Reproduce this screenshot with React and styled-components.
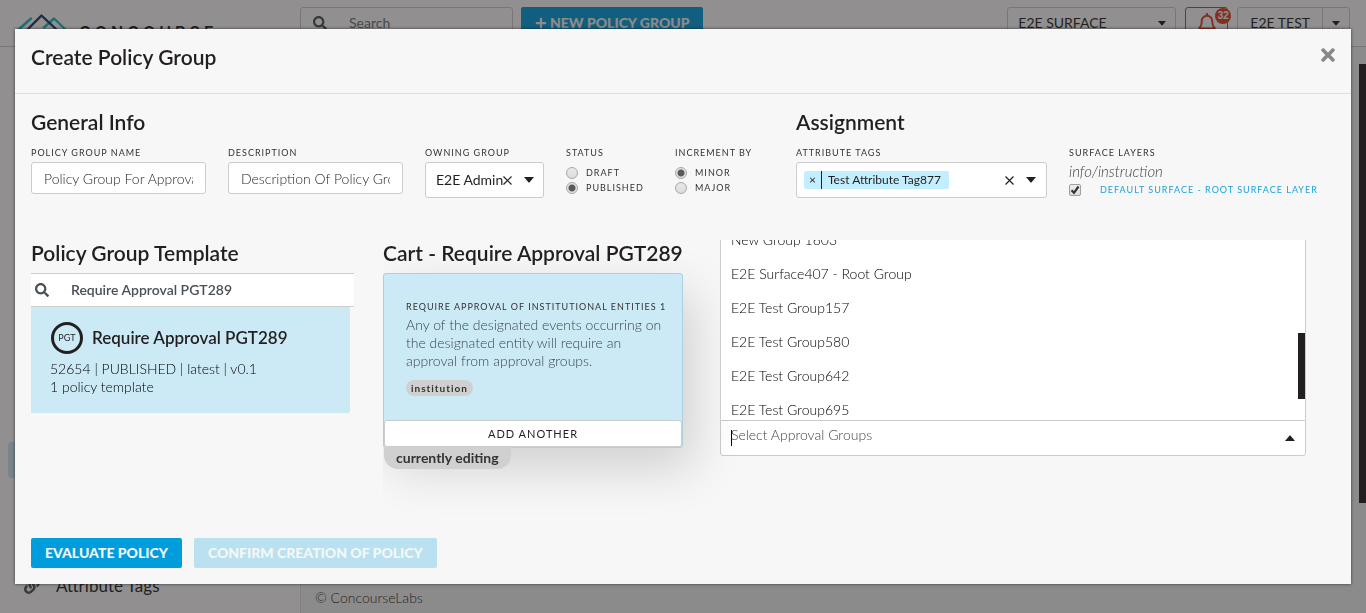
import React from 'react';
import styled, { createGlobalStyle, css } from 'styled-components';
import { FaSearch, FaPlus, FaTimes, FaLink, FaRegBell } from 'react-icons/fa';

const ink = '#231f20';
const blue = '#009ddc';
const paleBlue = '#cceaf6';
const line = '#cccccc';

const GlobalStyle = createGlobalStyle`
  * { box-sizing: border-box; }
  html, body, #root { height: 100%; }
  body {
    margin: 0;
    overflow: hidden;
    color: ${ink};
    font: 400 14px/18px Lato, "Liberation Sans", sans-serif;
  }
  button, input, select { font: inherit; color: inherit; margin: 0; }
  button { cursor: pointer; }
  h1, h2, p, ul, fieldset, legend { margin: 0; padding: 0; border: 0; }
  ul { list-style: none; }
`;

/* ---------- page behind the dialog ---------- */

const Page = styled.div`
  height: 100%;
  display: flex;
  flex-direction: column;
  background: #fff;
`;

const TopBar = styled.header`
  height: 47px;
  flex: none;
  display: flex;
  align-items: flex-start;
  padding: 7px 16px 0 0;
  border-bottom: 1px solid ${line};
`;

const Brand = styled.a`
  width: 300px;
  display: flex;
  align-items: flex-start;
  padding: 5px 0 0 16px;
  color: ${ink};
  text-decoration: none;
`;

const BrandName = styled.span`
  padding: 10px 0 0 10px;
  font: 600 16px/20px Inter, "Liberation Sans", sans-serif;
  letter-spacing: 4px;
`;

const SearchBox = styled.label`
  width: 213px;
  height: 32px;
  display: flex;
  align-items: center;
  gap: 22px;
  margin-right: 8px;
  padding: 0 12px;
  border: 1px solid ${line};
  border-radius: 3px;
  color: #495057;
`;

const PlainInput = styled.input`
  flex: 1;
  min-width: 0;
  width: 100%;
  height: 18px;
  padding: 0;
  border: 0;
  outline: 0;
  background: transparent;
  font-weight: ${(p) => p.$weight || 400};
  &::placeholder { color: ${(p) => (p.$weight === 300 ? '#3c454d' : '#6c757d')}; opacity: 1; }
`;

const Button = styled.button`
  height: ${(p) => (p.$tall ? 32 : 30)}px;
  display: inline-flex;
  align-items: center;
  gap: 3px;
  padding: 0 14px;
  border: 0;
  border-radius: 2px;
  background: ${blue};
  color: #f7f7f7;
  font-weight: 900;
  white-space: nowrap;
  &:disabled { background: #b9e1f0; cursor: default; }
`;

const BarTools = styled.div`
  margin-left: auto;
  display: flex;
  gap: 9px;
`;

const SelectWrap = styled.div`
  position: relative;
  width: ${(p) => p.$width}px;
  height: ${(p) => p.$height}px;
`;

const Select = styled.select`
  appearance: none;
  width: 100%;
  height: 100%;
  padding: 0 10px;
  border: 1px solid ${line};
  border-radius: 3px;
  background: ${(p) => (p.$filled ? '#fff' : 'transparent')};
`;

const SelectMarks = styled.span`
  position: absolute;
  inset: 0 10px 0 auto;
  display: flex;
  align-items: center;
  gap: 12px;
  pointer-events: none;
`;

const AlertButton = styled.button`
  position: relative;
  width: 43px;
  height: 32px;
  border: 1px solid #dc3e26;
  border-radius: 3px;
  background: transparent;
  color: #dc3e26;
  font-size: 20px;
`;

const Badge = styled.span`
  position: absolute;
  top: 0;
  right: -4px;
  width: 16px;
  height: 16px;
  border-radius: 50%;
  background: #dc3e26;
  color: #fff;
  font: 700 10px/16px "Liberation Sans", sans-serif;
  text-align: center;
`;

const SplitButton = styled.div`
  display: flex;
  height: 32px;
  border: 1px solid ${line};
  border-radius: 3px;
`;

const SplitPart = styled.button`
  padding: 0 ${(p) => (p.$caret ? 9 : 12)}px;
  border: 0;
  border-left: ${(p) => (p.$caret ? `1px solid ${line}` : 0)};
  background: transparent;
  display: flex;
  align-items: center;
`;

const Columns = styled.div`
  flex: 1;
  display: flex;
  min-height: 0;
`;

const Sidebar = styled.nav`
  width: 301px;
  display: flex;
  flex-direction: column;
  justify-content: flex-end;
  gap: 90px;
  padding: 8px 8px 9px;
  border-right: 1px solid #e2e2e2;
`;

const NavLink = styled.a`
  height: 36px;
  display: flex;
  align-items: center;
  gap: 16px;
  padding: 0 16px;
  border-radius: 3px;
  background: ${(p) => (p.$current ? paleBlue : 'transparent')};
  color: ${ink};
  font-size: 17px;
  text-decoration: none;
  svg { color: #555; }
`;

const Main = styled.main`
  flex: 1;
  display: flex;
  align-items: flex-end;
  justify-content: space-between;
  background: #f5f7f8;
`;

const Copyright = styled.footer`
  padding: 0 14px 6px;
  color: ${ink};
  font-weight: 300;
`;

const PageScroll = styled.div`
  align-self: stretch;
  width: 7px;
  margin: 17px 0 110px;
  background: ${ink};
`;

const Shade = styled.div`
  position: fixed;
  inset: 0;
  background: rgba(35, 31, 32, 0.5);
`;

/* ---------- dialog ---------- */

const Dialog = styled.section`
  position: fixed;
  inset: 29px 15px;
  display: flex;
  flex-direction: column;
  background: #f7f7f7;
  box-shadow: 0 0 3px rgba(0, 0, 0, 0.6);
`;

const DialogHead = styled.header`
  height: 65px;
  flex: none;
  display: flex;
  justify-content: space-between;
  align-items: flex-start;
  padding: 16px 13px 0 16px;
  border-bottom: 1px solid #dedede;
`;

const Title = styled.h2`
  font-size: 21px;
  line-height: 24px;
  font-weight: 600;
  white-space: nowrap;
`;

const IconButton = styled.button`
  display: flex;
  padding: 0;
  border: 0;
  background: transparent;
  font-size: ${(p) => p.$size}px;
  color: ${(p) => p.$color || ink};
`;

const DialogBody = styled.div`
  flex: 1;
  min-height: 0;
  padding: 16px 45px 0 16px;
`;

const TopRow = styled.div`
  display: flex;
  height: 130px;
`;

const Section = styled.section`
  flex: ${(p) => p.$grow} 1 0;
  min-width: 0;
`;

const Fields = styled.div`
  display: flex;
  align-items: flex-start;
  gap: 22px;
  padding-top: 12px;
`;

const caps = css`
  font-size: 9px;
  line-height: 14px;
  letter-spacing: 1px;
  text-transform: uppercase;
  white-space: nowrap;
`;

const Field = styled.div`
  flex: none;
  width: ${(p) => (p.$width ? `${p.$width}px` : 'auto')};
  display: flex;
  flex-direction: column;
  align-items: stretch;
`;

const FieldLabel = styled.label`
  ${caps}
  display: block;
  margin-bottom: 2px;
  color: #333;
`;

const TextInput = styled.input`
  width: 100%;
  height: 32px;
  padding: 0 12px;
  border: 1px solid ${line};
  border-radius: 3px;
  background: #fff;
  color: #1c242b;
  font-weight: 300;
`;

const Choice = styled.label`
  ${caps}
  display: flex;
  align-items: center;
  gap: 8px;
  height: 15px;
  color: #333;
  ${(p) => p.$link && css`
    gap: 19px;
    height: 20px;
    color: #1ba3da;
  `}
`;

const Choices = styled.div`
  padding-top: 3px;
`;

const Radio = styled.input.attrs({ type: 'radio' })`
  appearance: none;
  width: 12px;
  height: 12px;
  border: 1px solid #a8a8a8;
  border-radius: 50%;
  background: linear-gradient(#e9e9e9, #dcdcdc);
  &:checked {
    background: radial-gradient(circle, #5a5a5a 0 3px, #e3e3e3 4px);
  }
`;

const TickWrap = styled.span`
  position: relative;
  display: flex;
  svg {
    position: absolute;
    inset: 0;
    pointer-events: none;
  }
`;

const TickBox = styled.input.attrs({ type: 'checkbox' })`
  appearance: none;
  width: 12px;
  height: 12px;
  border: 1px solid #a0a0a0;
  border-radius: 2px;
  background: linear-gradient(#eeeeee, #dcdcdc);
`;

const Hint = styled.p`
  color: #3c454d;
  font-size: 15px;
  font-style: italic;
  font-weight: 300;
`;

const TagField = styled.div`
  height: 36px;
  display: flex;
  align-items: center;
  gap: 12px;
  padding: 0 10px 0 7px;
  border: 1px solid ${line};
  border-radius: 3px;
  background: #fff;
`;

const Tag = styled.span`
  display: flex;
  height: 18px;
  border-radius: 2px;
  background: #c2eeff;
  font-size: 12px;
  white-space: nowrap;
`;

const TagRemove = styled.button`
  width: 18px;
  padding: 0;
  border: 0;
  border-right: 1px solid ${ink};
  background: transparent;
  line-height: 18px;
`;

const TagText = styled.span`
  padding: 0 8px 0 6px;
`;

const LowerRow = styled.div`
  display: flex;
  align-items: flex-start;
`;

const TemplateColumn = styled.section`
  width: 352px;
  padding: 1px 29px 0 0;
`;

const CartColumn = styled.section`
  width: 337px;
  padding-top: 1px;
  clip-path: inset(0 -40px -60px 0);
`;

const GroupsColumn = styled.section`
  flex: 1;
  min-width: 0;
`;

const TemplateSearch = styled.label`
  height: 34px;
  display: flex;
  align-items: center;
  gap: 22px;
  margin-top: 8px;
  padding: 0 4px;
  border: solid ${line};
  border-width: 1px 0;
  background: #fff;
  color: #495057;
`;

const TemplateCard = styled.article`
  height: 106px;
  margin-right: 4px;
  padding: 15px 19px;
  border-radius: 0 2px 2px 0;
  background: ${paleBlue};
  color: #000;
  font-weight: 300;
`;

const TemplateName = styled.div`
  display: flex;
  align-items: center;
  gap: 9px;
  margin-bottom: 6px;
  color: ${ink};
  font-size: 17px;
  font-weight: 600;
`;

const Seal = styled.span`
  width: 32px;
  height: 32px;
  margin-left: 1px;
  border: 3px solid ${ink};
  border-radius: 50%;
  font-size: 9px;
  font-weight: 400;
  line-height: 26px;
  text-align: center;
`;

const CartCard = styled.article`
  width: 300px;
  height: 175px;
  margin-top: 8px;
  display: flex;
  flex-direction: column;
  border: 1px solid #acd0de;
  border-radius: 3px;
  background: ${paleBlue};
  box-shadow: 10px 20px 50px rgba(0, 0, 0, 0.16);
`;

const CartText = styled.div`
  flex: 1;
  padding: 26px 18px 0 22px;
  color: #3c454d;
  font-weight: 300;
`;

const CartHeading = styled.h3`
  ${caps}
  margin: 0 0 2px;
  font-weight: 400;
  color: #333;
`;

const Pill = styled.span`
  display: inline-block;
  margin-top: 10px;
  padding: 0 5px;
  border-radius: 8px;
  background: #d0d0d0;
  color: #333;
  font-size: 10px;
  line-height: 16px;
  font-weight: 700;
  letter-spacing: 1px;
`;

const AddButton = styled.button`
  height: 27px;
  padding: 0;
  border: 1px solid ${line};
  border-radius: 3px;
  background: #fff;
  font-size: 11px;
  letter-spacing: 1px;
`;

const Editing = styled.span`
  position: relative;
  display: inline-block;
  height: 22px;
  margin: -1px 0 0 1px;
  padding: 0 12px;
  border-radius: 0 0 14px 14px;
  background: #d0d0d0;
  font-weight: 700;
  line-height: 22px;
  color: #333;
`;

const Menu = styled.div`
  position: relative;
  height: 180px;
  overflow: hidden;
  border: solid ${line};
  border-width: 0 1px;
  background: #fff;
`;

const Options = styled.ul`
  margin-top: -17px;
`;

const Option = styled.li`
  height: 34px;
  padding: 0 10px;
  color: #000;
  font-weight: 300;
  line-height: 34px;
`;

const MenuThumb = styled.span`
  position: absolute;
  top: 93px;
  right: 0;
  width: 7px;
  height: 66px;
  background: ${ink};
`;

const Combo = styled.div`
  height: 36px;
  display: flex;
  align-items: center;
  padding: 0 10px;
  border: 1px solid ${line};
  border-radius: 0 0 3px 3px;
  background: #fff;
  input {
    align-self: flex-start;
    margin-top: 5px;
  }
`;

const Cursor = styled.span`
  width: 1px;
  height: 16px;
  margin-right: -1px;
  background: #000;
`;

const DialogFoot = styled.footer`
  display: flex;
  gap: 12px;
  padding: 0 16px 16px;
`;

const Cross = () => (
  <svg width="9" height="9" viewBox="0 0 9 9" stroke={ink} strokeWidth="1.2" aria-hidden="true">
    <path d="M0.5 0.5l8 8M8.5 0.5l-8 8" />
  </svg>
);

const Caret = ({ up, small }) => (
  <svg width={small ? 8 : 10} height={small ? 5 : 6} viewBox="0 0 10 6" fill={ink} aria-hidden="true">
    <path d={up ? 'M0 6h10L5.6 0.7a.8.8 0 0 0-1.2 0z' : 'M0 0h10L5.6 5.3a.8.8 0 0 1-1.2 0z'} />
  </svg>
);

const Logo = () => (
  <svg width="53" height="34" viewBox="0 0 53 34" fill="none" strokeWidth="2.4" strokeLinecap="round" strokeLinejoin="round" aria-hidden="true">
    <path d="M1 19L15 6.500M28 15.500L38 6.500L51 19" stroke="#10c0cc" />
    <path d="M10 19L25.500 3.500L42 19" stroke="#0a3a6b" />
  </svg>
);

const groups = [
  'New Group 1603',
  'E2E Surface407 - Root Group',
  'E2E Test Group157',
  'E2E Test Group580',
  'E2E Test Group642',
  'E2E Test Group695',
];

export default function App() {
  return (
    <>
      <GlobalStyle />
      <Page>
        <TopBar>
          <Brand href="#">
            <Logo />
            <BrandName>CONCOURSE</BrandName>
          </Brand>
          <SearchBox>
            <FaSearch size={14} />
            <PlainInput placeholder="Search" aria-label="Search" />
          </SearchBox>
          <Button $tall>
            <FaPlus size={12} />
            NEW POLICY GROUP
          </Button>
          <BarTools>
            <SelectWrap $width={169} $height={32}>
              <Select aria-label="Surface" defaultValue="E2E SURFACE">
                <option>E2E SURFACE</option>
              </Select>
              <SelectMarks><Caret small /></SelectMarks>
            </SelectWrap>
            <AlertButton aria-label="Alerts">
              <FaRegBell />
              <Badge>32</Badge>
            </AlertButton>
            <SplitButton>
              <SplitPart>E2E TEST</SplitPart>
              <SplitPart $caret aria-label="Account menu"><Caret small /></SplitPart>
            </SplitButton>
          </BarTools>
        </TopBar>
        <Columns>
          <Sidebar>
            <NavLink href="#" $current aria-label="Policy groups" />
            <NavLink href="#"><FaLink size={16} />Attribute Tags</NavLink>
          </Sidebar>
          <Main>
            <Copyright>© ConcourseLabs</Copyright>
            <PageScroll />
          </Main>
        </Columns>
      </Page>
      <Shade />

      <Dialog role="dialog" aria-labelledby="dialog-title">
        <DialogHead>
          <Title as="h1" id="dialog-title">Create Policy Group</Title>
          <IconButton $size={20} $color="#888" aria-label="Close"><FaTimes /></IconButton>
        </DialogHead>

        <DialogBody>
          <TopRow>
            <Section $grow={765}>
              <Title>General Info</Title>
              <Fields>
                <Field $width={175}>
                  <FieldLabel htmlFor="name">Policy Group Name</FieldLabel>
                  <TextInput id="name" defaultValue="Policy Group For Approval" />
                </Field>
                <Field $width={175}>
                  <FieldLabel htmlFor="description">Description</FieldLabel>
                  <TextInput id="description" defaultValue="Description Of Policy Group" />
                </Field>
                <Field $width={119}>
                  <FieldLabel htmlFor="owner">Owning Group</FieldLabel>
                  <SelectWrap $width={119} $height={36}>
                    <Select id="owner" $filled defaultValue="E2E Admin">
                      <option>E2E Admin</option>
                    </Select>
                    <SelectMarks><Cross /><Caret /></SelectMarks>
                  </SelectWrap>
                </Field>
                <Field as="fieldset" $width={87}>
                  <FieldLabel as="legend">Status</FieldLabel>
                  <Choices>
                    <Choice><Radio name="status" />Draft</Choice>
                    <Choice><Radio name="status" defaultChecked />Published</Choice>
                  </Choices>
                </Field>
                <Field as="fieldset" $width={87}>
                  <FieldLabel as="legend">Increment By</FieldLabel>
                  <Choices>
                    <Choice><Radio name="increment" defaultChecked />Minor</Choice>
                    <Choice><Radio name="increment" />Major</Choice>
                  </Choices>
                </Field>
              </Fields>
            </Section>
            <Section $grow={510}>
              <Title>Assignment</Title>
              <Fields>
                <Field $width={251}>
                  <FieldLabel htmlFor="tags">Attribute Tags</FieldLabel>
                  <TagField>
                    <Tag>
                      <TagRemove aria-label="Remove tag">×</TagRemove>
                      <TagText>Test Attribute Tag877</TagText>
                    </Tag>
                    <PlainInput id="tags" />
                    <IconButton aria-label="Clear tags"><Cross /></IconButton>
                    <Caret />
                  </TagField>
                </Field>
                <Field>
                  <FieldLabel as="span">Surface Layers</FieldLabel>
                  <Hint>info/instruction</Hint>
                  <Choice $link>
                    <TickWrap>
                      <TickBox defaultChecked />
                      <svg width="12" height="12" viewBox="0 0 12 12" fill="none" stroke="#333" strokeWidth="2.2" aria-hidden="true">
                        <path d="M2.500 6.200L5 8.800L9.500 2.500" />
                      </svg>
                    </TickWrap>
                    Default Surface - Root Surface Layer
                  </Choice>
                </Field>
              </Fields>
            </Section>
          </TopRow>

          <LowerRow>
            <TemplateColumn>
              <Title>Policy Group Template</Title>
              <TemplateSearch>
                <FaSearch size={14} />
                <PlainInput $weight={600} defaultValue="Require Approval PGT289" aria-label="Search templates" />
              </TemplateSearch>
              <TemplateCard>
                <TemplateName><Seal>PGT</Seal>Require Approval PGT289</TemplateName>
                <p>52654 | PUBLISHED | latest | v0.1</p>
                <p>1 policy template</p>
              </TemplateCard>
            </TemplateColumn>

            <CartColumn>
              <Title>Cart - Require Approval PGT289</Title>
              <CartCard>
                <CartText>
                  <CartHeading>Require Approval of Institutional Entities 1</CartHeading>
                  <p>Any of the designated events occurring on the designated entity will require an approval from approval groups.</p>
                  <Pill>institution</Pill>
                </CartText>
                <AddButton>ADD ANOTHER</AddButton>
              </CartCard>
              <Editing>currently editing</Editing>
            </CartColumn>

            <GroupsColumn>
              <Menu>
                <Options role="listbox" aria-label="Approval groups">
                  {groups.map((name) => (
                    <Option key={name} role="option">{name}</Option>
                  ))}
                </Options>
                <MenuThumb />
              </Menu>
              <Combo>
                <Cursor />
                <PlainInput $weight={300} role="combobox" aria-expanded="true" placeholder="Select Approval Groups" aria-label="Select approval groups" />
                <Caret up />
              </Combo>
            </GroupsColumn>
          </LowerRow>
        </DialogBody>

        <DialogFoot>
          <Button>EVALUATE POLICY</Button>
          <Button disabled>CONFIRM CREATION OF POLICY</Button>
        </DialogFoot>
      </Dialog>
    </>
  );
}
